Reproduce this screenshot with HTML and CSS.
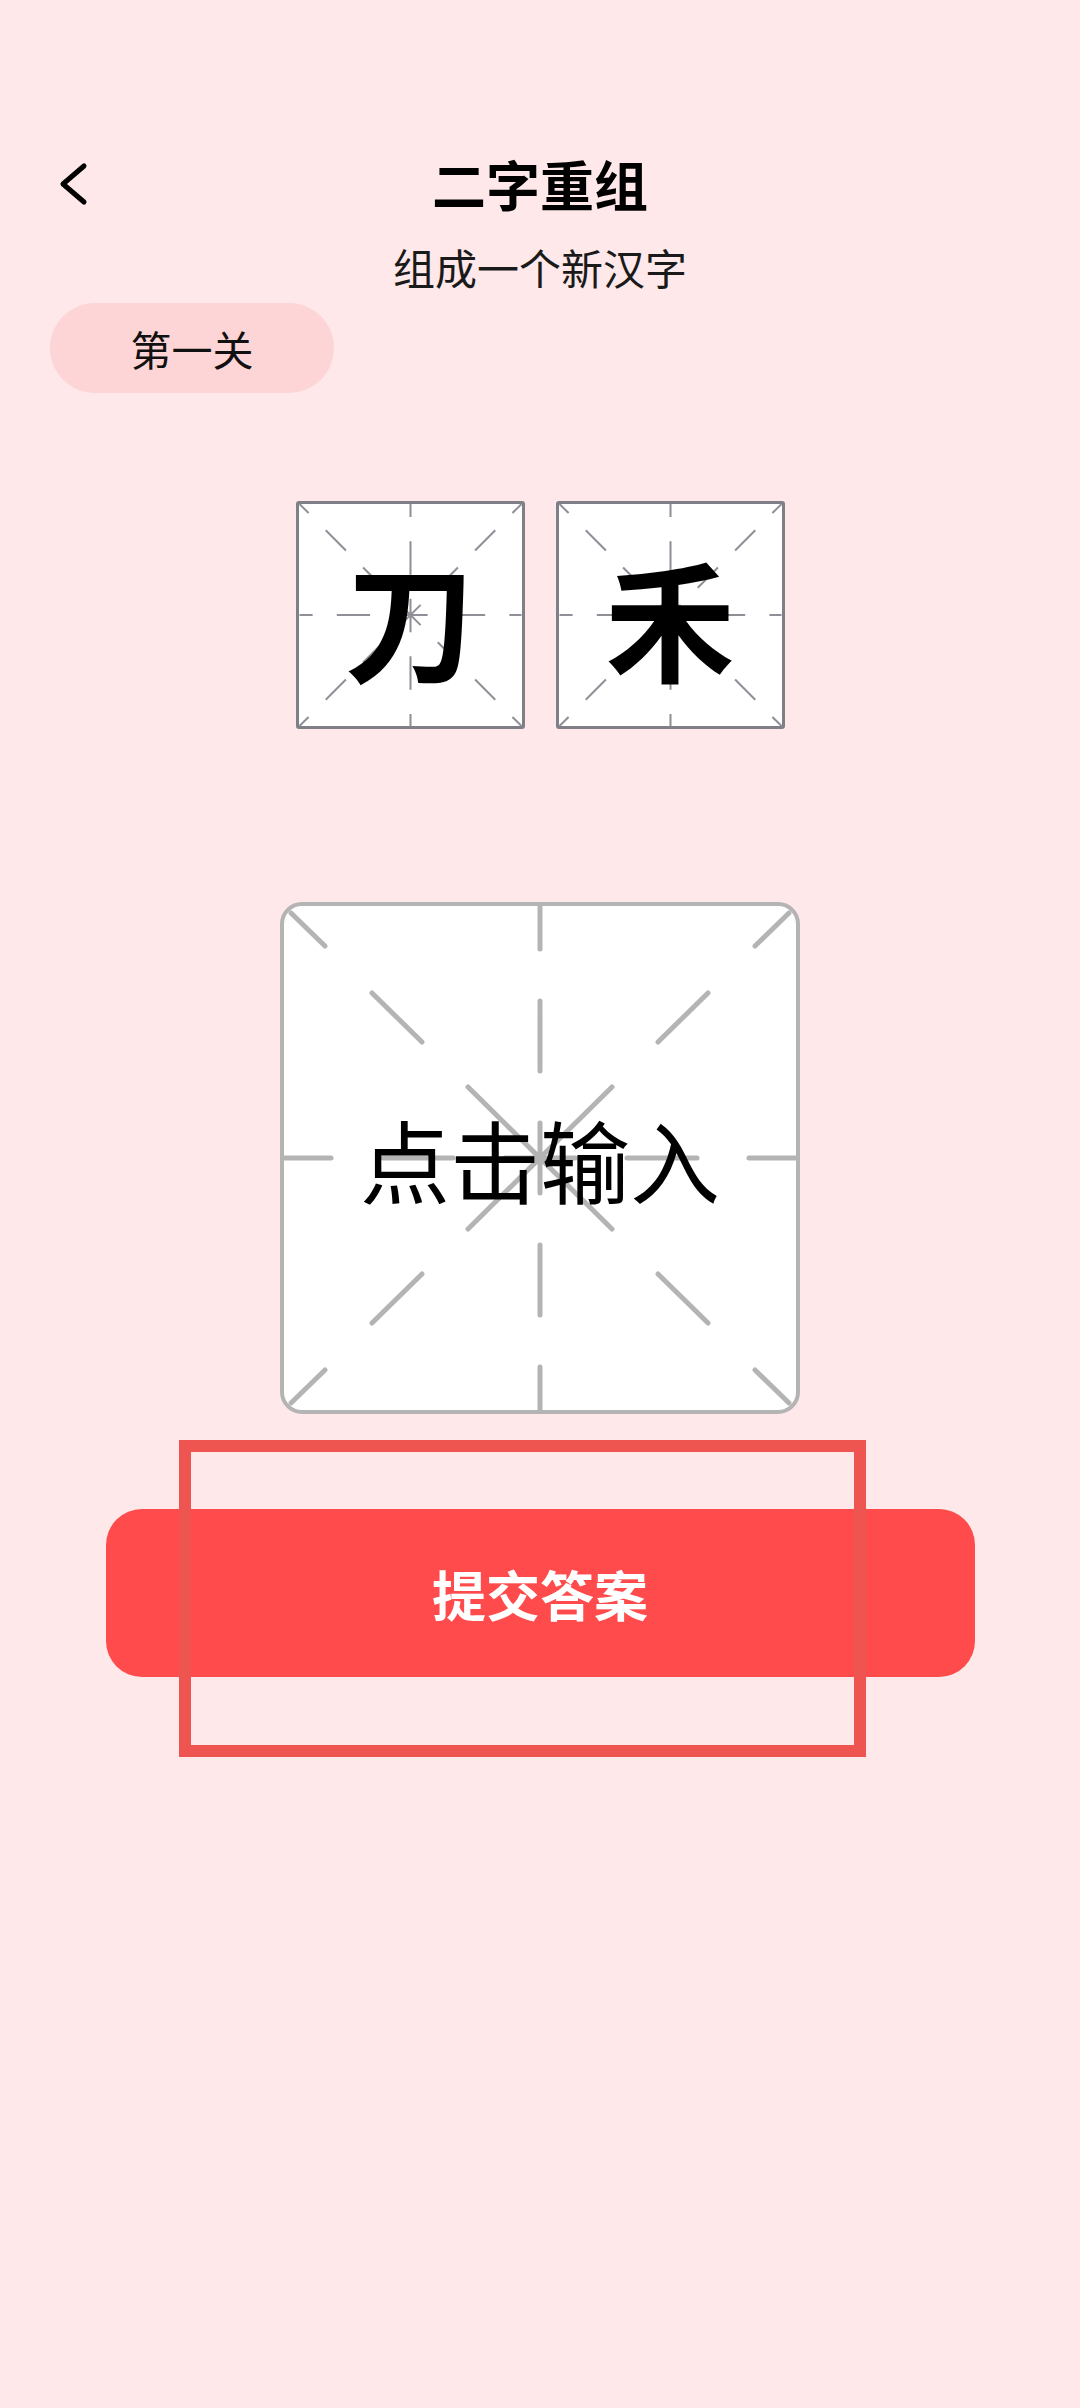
FILE: index.html
```html
<!DOCTYPE html>
<html lang="zh-CN">

<head>
    <meta charset="UTF-8">
    <meta name="viewport" content="width=device-width, initial-scale=1.0">
    <title>二字重组</title>
    <link rel="stylesheet" href="styles.css">
</head>

<body>
    <div class="page">
        <header class="topbar">
            <div class="back">
                <svg width="30" height="44" viewBox="0 0 30 44">
                    <path d="M26 4 L5 22 L26 40" fill="none" stroke="#000" stroke-width="5" stroke-linecap="round" stroke-linejoin="round" />
                </svg>
            </div>
            <h1 class="title">二字重组</h1>
            <div></div>
        </header>

        <p class="subtitle">组成一个新汉字</p>

        <div class="level-row">
            <span class="level-pill">第一关</span>
        </div>

        <div class="given">
            <div class="char-box">
                <svg class="grid" viewBox="0 0 220 220">
                    <path d="M110 0V13 M110 37V70 M110 94V127 M110 151V184 M110 208V220
                             M0 110H13 M37 110H70 M94 110H127 M151 110H184 M208 110H220
                             M0 0L9 9 M26 26L46 46 M63 63L83 83 M100 100L120 120 M137 137L157 157 M174 174L194 194 M211 211L220 220
                             M220 0L211 9 M194 26L174 46 M157 63L137 83 M120 100L100 120 M83 137L63 157 M46 174L26 194 M9 211L0 220" />
                </svg>
                <span class="char">刀</span>
            </div>
            <div class="char-box">
                <svg class="grid" viewBox="0 0 220 220">
                    <path d="M110 0V13 M110 37V70 M110 94V127 M110 151V184 M110 208V220
                             M0 110H13 M37 110H70 M94 110H127 M151 110H184 M208 110H220
                             M0 0L9 9 M26 26L46 46 M63 63L83 83 M100 100L120 120 M137 137L157 157 M174 174L194 194 M211 211L220 220
                             M220 0L211 9 M194 26L174 46 M157 63L137 83 M120 100L100 120 M83 137L63 157 M46 174L26 194 M9 211L0 220" />
                </svg>
                <span class="char">禾</span>
            </div>
        </div>

        <div class="answer-box">
            <svg class="grid" viewBox="0 0 512 504" preserveAspectRatio="none">
                <path d="M256 0V43 M256 95V165 M256 217V287 M256 339V409 M256 461V504
                         M0 252H47 M99 252H169 M221 252H291 M343 252H413 M465 252H512
                         M7 7L41 40 M88 87L138 136 M184 181L328 323 M374 368L424 417 M471 464L505 497
                         M505 7L471 40 M424 87L374 136 M328 181L184 323 M138 368L88 417 M41 464L7 497" />
            </svg>
            <span class="answer-text">点击输入</span>
        </div>

        <button class="submit" type="button">提交答案</button>

        <div class="highlight"></div>
    </div>
</body>

</html>
```

FILE: styles.css
```css
body {
    margin: 0;
    padding: 0;
    font-family: "Noto Sans CJK SC", "Noto Sans", sans-serif;
    color: #111;
    background-color: #fee8e9;
}

.page {
    position: relative;
    width: 1080px;
    min-height: 2408px;
    padding-top: 144px;
    box-sizing: border-box;
    background-color: #fee8e9;
}

.topbar {
    display: grid;
    grid-template-columns: 1fr auto 1fr;
    align-items: center;
    height: 80px;
}

.back {
    display: flex;
    align-items: center;
    padding-left: 58px;
}

.back svg {
    display: block;
}

.title {
    margin: 0;
    font-size: 54px;
    font-weight: bold;
    line-height: 80px;
    color: #000;
}

.subtitle {
    margin: 13px 0 0;
    text-align: center;
    font-size: 42px;
    line-height: 60px;
    color: #1a1a1a;
}

.level-row {
    margin-top: 6px;
    padding-left: 50px;
}

.level-pill {
    display: flex;
    align-items: center;
    justify-content: center;
    width: 284px;
    height: 90px;
    border-radius: 45px;
    background-color: #fdd5d6;
    font-size: 41px;
    color: #111;
}

.given {
    display: flex;
    justify-content: center;
    gap: 31px;
    margin-top: 108px;
}

.char-box {
    position: relative;
    display: flex;
    align-items: center;
    justify-content: center;
    width: 229px;
    height: 228px;
    box-sizing: border-box;
    border: 3px solid #7f7f87;
    border-radius: 3px;
    background-color: #fff;
}

.char-box .grid path {
    fill: none;
    stroke: #8f8f97;
    stroke-width: 2;
}

.grid {
    position: absolute;
    top: 0;
    left: 0;
    width: 100%;
    height: 100%;
}

.char {
    position: relative;
    font-size: 130px;
    font-weight: bold;
    line-height: 1;
    color: #000;
}

.answer-box {
    position: relative;
    display: flex;
    align-items: center;
    justify-content: center;
    width: 520px;
    height: 512px;
    margin: 173px auto 0;
    box-sizing: border-box;
    border: 4px solid #b4b4b4;
    border-radius: 22px;
    background-color: #fff;
    overflow: hidden;
}

.answer-box .grid path {
    fill: none;
    stroke: #b4b4b4;
    stroke-width: 5;
    stroke-linecap: round;
}

.answer-text {
    position: relative;
    font-size: 90px;
    line-height: 1;
    color: #000;
}

.submit {
    display: block;
    width: 869px;
    height: 168px;
    margin: 95px auto 0;
    border: none;
    border-radius: 36px;
    background-color: #ff4b4b;
    color: #fff;
    font-family: inherit;
    font-size: 54px;
    font-weight: bold;
}

.highlight {
    position: absolute;
    left: 179px;
    top: 1440px;
    width: 687px;
    height: 317px;
    box-sizing: border-box;
    border: 12px solid #ee5450;
}
```
